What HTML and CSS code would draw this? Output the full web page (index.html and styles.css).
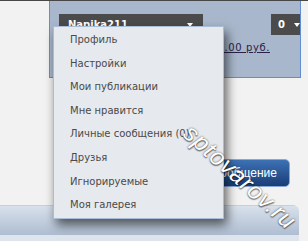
FILE: index.html
```html
<!DOCTYPE html>
<html lang="ru">
<head>
<meta charset="utf-8">
<title>Меню пользователя</title>
<link rel="stylesheet" href="styles.css">
</head>
<body>
<div class="topline"></div>
<header class="panel">
  <div class="bar-row">
    <div class="user">Napika211<span class="caret"></span></div>
    <div class="count">0<span class="caret"></span></div>
  </div>
  <div class="balance"><a href="#">Баланс: 0.00 руб.</a></div>
</header>
<div class="actions"><button class="btn">Сообщение</button></div>
<section class="block">
  <div class="block-head"></div>
  <div class="block-body"></div>
</section>
<ul class="menu">
  <li>Профиль</li>
  <li>Настройки</li>
  <li>Мои публикации</li>
  <li>Мне нравится</li>
  <li>Личные сообщения (0)</li>
  <li>Друзья</li>
  <li>Игнорируемые</li>
  <li>Моя галерея</li>
</ul>
<div class="watermark">sptovarov.ru</div>
</body>
</html>
```

FILE: styles.css
```css
html, body {
  margin: 0;
  padding: 0;
}
body {
  width: 308px;
  height: 241px;
  overflow: hidden;
  position: relative;
  background: #f2f2f2;
  font-family: "DejaVu Sans", Verdana, sans-serif;
}
.topline {
  height: 1px;
  background: #474747;
}
.panel {
  margin-left: 49px;
  width: 252px;
  height: 77px;
  box-sizing: border-box;
  background: #a8b7cb;
  border: 1px solid #5f8fd2;
  border-top: 0;
  padding: 13px 0 0 9px;
}
.bar-row {
  display: flex;
  justify-content: space-between;
  height: 21px;
}
.user, .count {
  display: flex;
  align-items: center;
  box-sizing: border-box;
  background: #4b4b4b;
  color: #fff;
  font-weight: bold;
  font-size: 10px;
}
.user {
  width: 144px;
  padding: 0 10px 0 9px;
}
.count {
  width: 29px;
  padding: 0 0 0 7px;
}
.caret {
  margin-left: auto;
  width: 0;
  height: 0;
  border-left: 3.5px solid transparent;
  border-right: 3.5px solid transparent;
  border-top: 4px solid #fff;
}
.balance {
  margin-top: 7px;
  padding-right: 30px;
  text-align: right;
  font-size: 10px;
  letter-spacing: 0.6px;
}
.balance a {
  color: #2b2149;
  text-decoration: underline;
}
.actions {
  display: flex;
  justify-content: flex-end;
  padding-right: 18px;
  margin-top: 81px;
}
.btn {
  height: 28px;
  box-sizing: border-box;
  padding: 0 12px;
  border: 1px solid #86a8da;
  border-radius: 5px;
  background: linear-gradient(#3d71b5, #1a3d76);
  color: #fff;
  font: 12px "Liberation Sans", Arial, sans-serif;
}
.block {
  margin-top: 18px;
  margin-right: 9px;
  border-radius: 0 6px 0 0;
  overflow: hidden;
}
.block-head {
  height: 30px;
  box-sizing: border-box;
  border-top: 1px solid #c3d0e2;
  background: linear-gradient(#d8e1ec, #aebdd1);
}
.block-body {
  height: 6px;
  background: #dfe5ec;
}
.menu {
  position: absolute;
  left: 53px;
  top: 26px;
  width: 171px;
  height: 193px;
  box-sizing: border-box;
  margin: 0;
  padding: 1px 0 0 16px;
  list-style: none;
  background: #e6e9ed;
  border: 1px solid #a9bdd6;
  box-shadow: 3px 6px 10px rgba(0, 0, 0, 0.6);
  font-size: 10px;
  color: #4a4a4a;
}
.menu li {
  line-height: 23.6px;
  white-space: nowrap;
}
.watermark {
  position: absolute;
  left: 240px;
  top: 177px;
  transform: translate(-50%, -50%) rotate(42deg);
  white-space: nowrap;
  font: italic 24px "Liberation Sans", Arial, sans-serif;
  letter-spacing: 1px;
  color: #fff;
  text-shadow: 0 0 2px rgba(0, 0, 0, 0.7), 1px 1px 1px rgba(0, 0, 0, 0.4);
}
```
